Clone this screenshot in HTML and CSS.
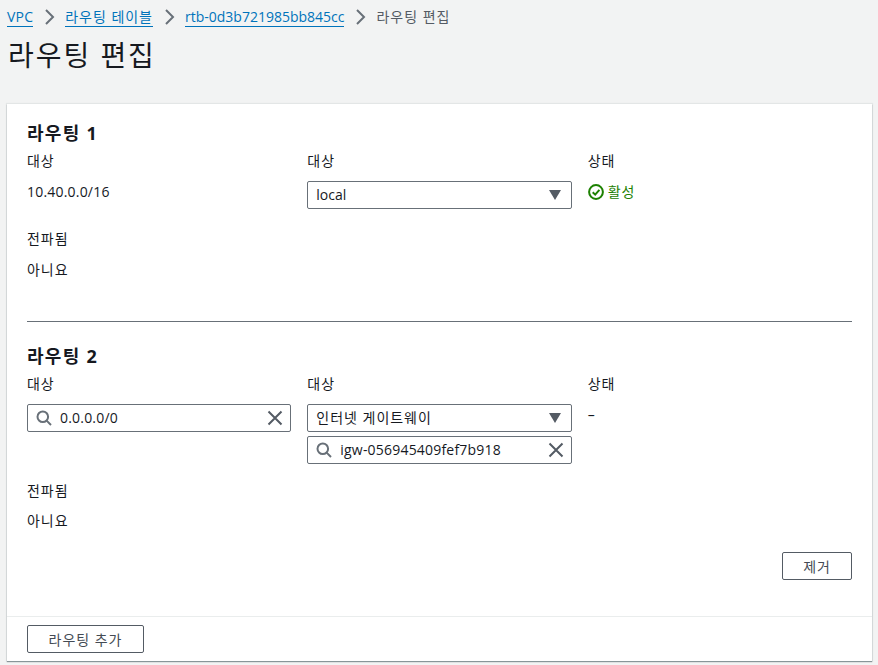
FILE: index.html
```html
<!DOCTYPE html>
<html lang="ko">
<head>
<meta charset="utf-8">
<title>라우팅 편집</title>
<link rel="stylesheet" href="styles.css">
</head>
<body>
<nav class="crumbs">
  <a href="#" class="num">VPC</a>
  <svg class="chev" viewBox="0 0 16 16"><path d="M5 1 12 8 5 15"/></svg>
  <a href="#" class="ko">라우팅 테이블</a>
  <svg class="chev" viewBox="0 0 16 16"><path d="M5 1 12 8 5 15"/></svg>
  <a href="#">rtb-0d3b721985bb845cc</a>
  <svg class="chev" viewBox="0 0 16 16"><path d="M5 1 12 8 5 15"/></svg>
  <span class="ko">라우팅 편집</span>
</nav>
<h1 class="title ko">라우팅 편집</h1>
<main class="card">
  <section class="route">
    <h2 class="ko">라우팅 1</h2>
    <div class="grid">
      <div class="cell">
        <div class="label ko">대상</div>
        <div class="value num">10.40.0.0/16</div>
      </div>
      <div class="cell">
        <div class="label ko">대상</div>
        <div class="field select"><span>local</span><svg class="caret" viewBox="0 0 12 10"><path d="M0 0h12L6 10z"/></svg></div>
      </div>
      <div class="cell">
        <div class="label ko">상태</div>
        <div class="value status ko"><svg class="ok" viewBox="0 0 16 16"><circle cx="8" cy="8" r="6.9"/><path d="M4.7 8.2 7.2 10.6 11.4 5.9"/></svg>활성</div>
      </div>
    </div>
    <div class="label prop ko">전파됨</div>
    <div class="value ko">아니요</div>
  </section>
  <hr class="rule">
  <section class="route second">
    <h2 class="ko">라우팅 2</h2>
    <div class="grid">
      <div class="cell">
        <div class="label ko">대상</div>
        <div class="field search">
          <svg class="mag" viewBox="0 0 16 16"><circle cx="6.8" cy="6.8" r="5.3"/><path d="M10.6 10.6 15 15"/></svg>
          <span class="num">0.0.0.0/0</span>
          <svg class="x" viewBox="0 0 16 16"><path d="M1.5 1.5 14.5 14.5M14.5 1.5 1.5 14.5"/></svg>
        </div>
      </div>
      <div class="cell">
        <div class="label ko">대상</div>
        <div class="field select"><span class="ko">인터넷 게이트웨이</span><svg class="caret" viewBox="0 0 12 10"><path d="M0 0h12L6 10z"/></svg></div>
        <div class="field search stacked">
          <svg class="mag" viewBox="0 0 16 16"><circle cx="6.8" cy="6.8" r="5.3"/><path d="M10.6 10.6 15 15"/></svg>
          <span class="num">igw-056945409fef7b918</span>
          <svg class="x" viewBox="0 0 16 16"><path d="M1.5 1.5 14.5 14.5M14.5 1.5 1.5 14.5"/></svg>
        </div>
      </div>
      <div class="cell">
        <div class="label ko">상태</div>
        <div class="value dash">–</div>
      </div>
    </div>
    <div class="label prop ko">전파됨</div>
    <div class="value ko">아니요</div>
    <div class="actions"><button class="btn remove ko">제거</button></div>
  </section>
  <footer class="foot"><button class="btn add ko">라우팅 추가</button></footer>
</main>
</body>
</html>
```

FILE: styles.css
```css
* { box-sizing: border-box; }
html, body { margin: 0; height: 665px; overflow: hidden; }
body {
  background: #f2f3f3;
  color: #16191f;
  font-family: "Open Sans", "Noto Sans CJK KR", sans-serif;
  font-size: 14px;
  line-height: 20px;
}
.ko { letter-spacing: .07em; }
.num { letter-spacing: .2px; }
.crumbs {
  display: flex;
  align-items: center;
  height: 22px;
  margin: 6px 0 0 7px;
  color: #545b64;
}
.crumbs a {
  color: #0073bb;
  text-decoration: none;
  border-bottom: 1px solid #0073bb;
  line-height: 18px;
}
.chev { width: 16px; height: 16px; margin: 0 8px; fill: none; stroke: #687078; stroke-width: 2; }
.title {
  margin: 4px 0 0 8px;
  font-size: 28px;
  line-height: 46px;
  font-weight: 400;
}
.card {
  margin: 26px 0 0 7px;
  width: 865px;
  height: 557px;
  background: #fff;
  box-shadow: 0 1px 1px 0 rgba(0, 28, 36, .4), 0 0 1px 1px rgba(0, 28, 36, .06);
  display: flex;
  flex-direction: column;
}
.route { padding: 17px 20px 0; }
.route h2 { margin: 0 0 6px; font-size: 18px; line-height: 24px; font-weight: 700; }
.grid { display: grid; grid-template-columns: repeat(3, 1fr); column-gap: 16px; }
.label { height: 20px; margin-bottom: 11px; }
.value { height: 20px; }
.cell:first-child .value, .cell:last-child .value { margin-top: 1px; }
.cell .dash { margin-top: 3px; }
.status { display: flex; align-items: center; gap: 4px; color: #1d8102; }
.ok { width: 16px; height: 16px; fill: none; stroke: #1d8102; stroke-width: 2; }
.prop { margin-top: 20px; height: 20px; margin-bottom: 11px; }
.field {
  display: flex;
  align-items: center;
  height: 28px;
  margin-top: -1px;
  border: 1px solid #687078;
  border-radius: 2px;
  background: #fff;
  padding: 0 10px 0 8px;
}
.field span { flex: 1; }
.search { padding-right: 7px; }
.search span { margin-left: 8px; }
.stacked { margin-top: 4px; }
.caret { width: 12px; height: 10px; fill: #545b64; }
.mag { width: 16px; height: 16px; fill: none; stroke: #687078; stroke-width: 2; }
.x { width: 16px; height: 16px; fill: none; stroke: #545b64; stroke-width: 2; }
.rule { margin: 41px 20px 0; border: 0; border-top: 1px solid #687078; height: 0; }
.second { padding-top: 22px; }
.second .prop { margin-top: 17px; margin-bottom: 10px; }
.actions { display: flex; justify-content: flex-end; margin-top: 21px; }
.btn {
  height: 28px;
  border: 1px solid #545b64;
  border-radius: 2px;
  background: #fff;
  color: #444b54;
  font-family: inherit;
  font-size: 14px;
  font-weight: 400;
  padding: 0;
}
.remove { width: 70px; }
.add { width: 117px; }
.foot {
  margin-top: auto;
  padding: 8px 20px;
  border-top: 1px solid #eaeded;
}
```
